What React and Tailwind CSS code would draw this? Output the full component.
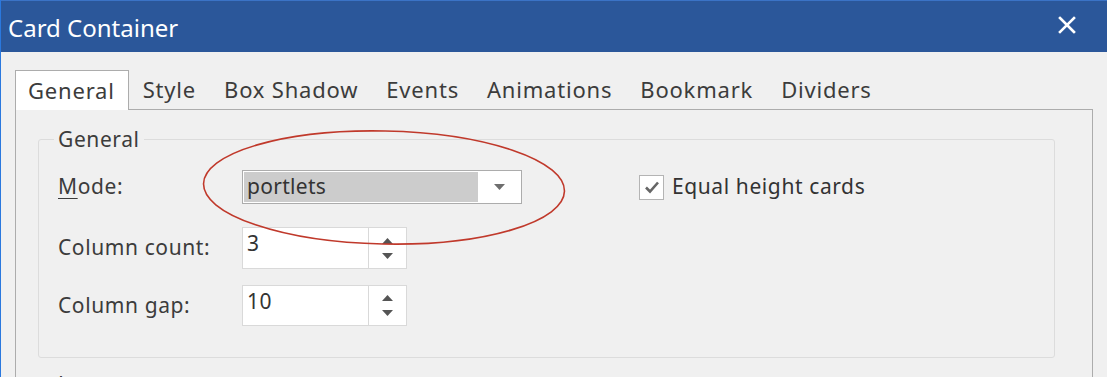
import React from "react";

const font = { fontFamily: '"Noto Sans", "Open Sans", sans-serif' };

function Spinner({ value }) {
  return (
    <div className="flex h-full">
      <div className="w-[127px] h-full bg-white border border-[#d9d9d9] pl-[4px] text-[21px] leading-[30px] text-[#333]">
        {value}
      </div>
      <div className="w-[38px] h-full bg-white border border-l-0 border-[#d9d9d9] flex flex-col items-center justify-center gap-[9px]">
        <svg width="11" height="6" viewBox="0 0 11 6"><path d="M5.5 0 L11 6 L0 6 Z" fill="#555" /></svg>
        <svg width="11" height="6" viewBox="0 0 11 6"><path d="M0 0 L11 0 L5.5 6 Z" fill="#555" /></svg>
      </div>
    </div>
  );
}

export default function App() {
  const tabs = ["Style", "Box Shadow", "Events", "Animations", "Bookmark", "Dividers"];
  return (
    <div style={font} className="w-[1107px] h-[377px] overflow-hidden bg-[#f0f0f0] border-l border-[#2a78de] flex flex-col">
      {/* Title bar */}
      <div className="h-[52px] shrink-0 bg-[#2b579a] border-t border-[#3b73c6] flex items-center justify-between pl-[7px] pr-[31px]">
        <span className="text-white text-[24px] leading-none mt-[3px]">Card Container</span>
        <svg width="18" height="18" viewBox="0 0 18 18" className="-mt-[3px]">
          <path d="M2 2 L16 16 M16 2 L2 16" stroke="#fff" strokeWidth="2.6" strokeLinecap="square" />
        </svg>
      </div>
      {/* Body */}
      <div className="flex-1 pt-[17px] pl-[14px] pr-[14px]">
        {/* Tabs */}
        <div className="flex items-end h-[40px] text-[22px] tracking-[0.8px] text-[#3c3c3c]">
          <div className="h-[40px] bg-white border border-b-0 border-[#acacac] pl-[12px] pr-[13px] flex items-center relative z-10 -mb-px">
            General
          </div>
          {tabs.map((t) => (
            <div key={t} className="h-[39px] px-[14px] flex items-center">{t}</div>
          ))}
        </div>
        {/* Panel */}
        <div className="w-[1078px] h-[300px] border border-[#acacac] border-b-0 bg-[#f0f0f0] pt-[29px] pl-[22px]">
          {/* Group box */}
          <div className="relative w-[1017px] h-[219px] border border-[#dcdcdc] rounded-[3px] text-[21px] tracking-[0.6px]">
            <span className="absolute left-[15px] -top-[15px] px-[4px] bg-[#f0f0f0] leading-[28px] text-[#3c3c3c]">
              General
            </span>
            <div className="pt-[30px] pl-[19px] flex text-[#3c3c3c]">
              <div className="flex flex-col">
                <div className="h-[34px] flex items-center w-[184px]"><span><span className="underline underline-offset-[4px] decoration-1">M</span>ode:</span></div>
                <div className="h-[42px] mt-[23px] flex items-center">Column count:</div>
                <div className="h-[41px] mt-[16px] flex items-center">Column gap:</div>
              </div>
              <div className="flex flex-col relative">
                <div className="h-[34px] w-[280px] border border-[#acacac] bg-white p-[1px] flex">
                  <div className="w-[234px] h-full bg-[#cccccc] pl-[3px] flex items-center text-[#333] tracking-[0.3px]">portlets</div>
                  <div className="flex-1 flex items-center justify-center">
                    <svg width="11" height="6" viewBox="0 0 11 6"><path d="M0 0 L11 0 L5.5 6 Z" fill="#6e6e6e" /></svg>
                  </div>
                </div>
                <div className="h-[42px] mt-[23px]"><Spinner value="3" /></div>
                <div className="h-[41px] mt-[16px]"><Spinner value="10" /></div>
                <svg className="absolute left-[-40px] top-[-40px] pointer-events-none" width="364" height="117" viewBox="0 0 364 117">
                  <ellipse cx="182" cy="57.5" rx="180.5" ry="56.5" fill="none" stroke="#c0392b" strokeWidth="1.6" transform="rotate(1.2 182 57.5)" />
                </svg>
              </div>
              <div className="ml-[117px] h-[34px] flex items-center gap-[8px]">
                <div className="w-[25px] h-[25px] bg-white border border-[#b4b4b4] flex items-center justify-center">
                  <svg width="16" height="14" viewBox="0 0 16 14"><path d="M2 7.5 L6 11.5 L14 2.5" fill="none" stroke="#666" strokeWidth="2.6" /></svg>
                </div>
                <span className="text-[#333]">Equal height cards</span>
              </div>
            </div>
          </div>
          {/* Next group box (clipped) */}
          <div className="relative w-[1017px] h-[100px] mt-[26px] border border-[#dcdcdc] rounded-[3px] text-[21px] tracking-[0.6px]">
            <span className="absolute left-[15px] -top-[15px] px-[4px] bg-[#f0f0f0] leading-[28px] text-[#3c3c3c]">
              Layout
            </span>
          </div>
        </div>
      </div>
    </div>
  );
}
